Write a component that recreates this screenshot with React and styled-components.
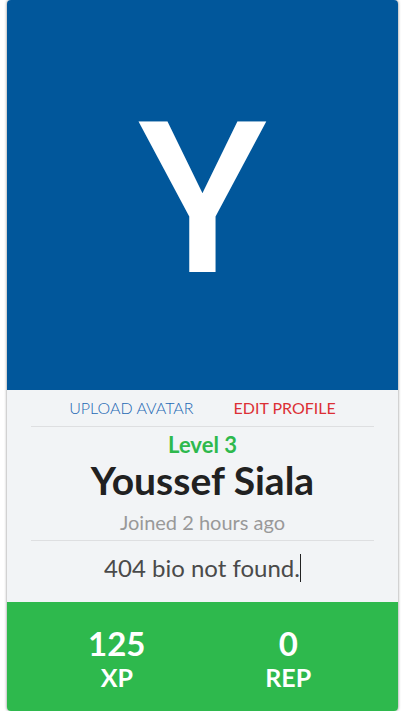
import React from "react";
import styled, { createGlobalStyle } from "styled-components";

const GlobalStyle = createGlobalStyle`
  * { box-sizing: border-box; }
  body {
    margin: 0;
    background: #fff;
    font-family: Lato, "Liberation Sans", sans-serif;
  }
`;

const Page = styled.main`
  padding: 0 8px 0 7px;
`;

const Card = styled.article`
  overflow: hidden;
  border-radius: 4px;
  background: #f2f4f6;
  box-shadow: 0 0 3px rgba(0, 0, 0, 0.5);
  text-align: center;
`;

const Avatar = styled.div`
  display: grid;
  place-items: center;
  aspect-ratio: 391 / 390;
  padding-top: 10px;
  background: #01579b;
  color: #fff;
  font-family: Roboto, sans-serif;
  font-size: 212px;
  font-weight: 500;
  line-height: 248px;
`;

const Details = styled.section`
  padding: 0 24px 20px;
`;

const Actions = styled.nav`
  display: flex;
  justify-content: center;
  gap: 40px;
  padding: 8px 0;
  border-bottom: 1px solid #dedfe1;
`;

const Action = styled.a`
  color: ${(p) => p.$color};
  font-size: 16px;
  font-weight: ${(p) => p.$weight};
  line-height: 20px;
  text-decoration: none;
  text-transform: uppercase;
`;

const Level = styled.p`
  margin: 0;
  padding-top: 6px;
  color: #2eb94d;
  font-size: 22px;
  font-weight: 700;
  line-height: 24px;
`;

const Name = styled.h1`
  margin: 0;
  color: #212121;
  font-size: 39px;
  font-weight: 700;
  line-height: 47px;
`;

const Joined = styled.p`
  margin: 0;
  padding: 6px 0;
  border-bottom: 1px solid #dedfe1;
  color: #999;
  font-size: 20px;
  line-height: 24px;
`;

const Bio = styled.p`
  display: flex;
  justify-content: center;
  align-items: center;
  margin: 0;
  padding-top: 13px;
  color: #4a4a4a;
  font-size: 24px;
  line-height: 28px;
`;

const Caret = styled.span`
  width: 1px;
  height: 28px;
  background: #222;
`;

const Stats = styled.dl`
  display: grid;
  grid-template-columns: 1fr 1fr;
  margin: 0;
  padding: 22px 24px 19px;
  background: #2eb94d;
  color: #fff;
  font-weight: 700;
`;

const Stat = styled.div`
  display: flex;
  flex-direction: column-reverse;
`;

const StatLabel = styled.dt`
  font-size: 25px;
  line-height: 30px;
`;

const StatValue = styled.dd`
  margin: 0;
  font-size: 33px;
  line-height: 38px;
`;

export default function App() {
  return (
    <>
      <GlobalStyle />
      <Page>
        <Card>
          <Avatar>Y</Avatar>
          <Details>
            <Actions>
              <Action href="#avatar" $color="#2468b4" $weight={300}>Upload avatar</Action>
              <Action href="#profile" $color="#dc2f35" $weight={400}>Edit profile</Action>
            </Actions>
            <Level>Level 3</Level>
            <Name>Youssef Siala</Name>
            <Joined>Joined 2 hours ago</Joined>
            <Bio>404 bio not found.<Caret /></Bio>
          </Details>
          <Stats>
            <Stat><StatLabel>XP</StatLabel><StatValue>125</StatValue></Stat>
            <Stat><StatLabel>REP</StatLabel><StatValue>0</StatValue></Stat>
          </Stats>
        </Card>
      </Page>
    </>
  );
}
